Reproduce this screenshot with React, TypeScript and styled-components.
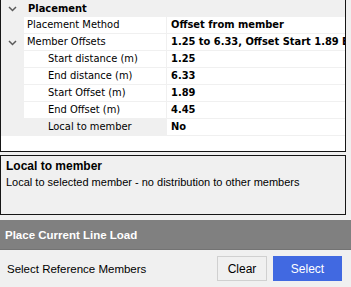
import React from "react";
import styled, { createGlobalStyle } from "styled-components";

const GlobalStyle = createGlobalStyle`
  body {
    margin: 0;
    background: #f0f0f0;
  }
`;

type Prop = {
  label: string;
  value: string;
  level: number;
  expandable?: boolean;
  selected?: boolean;
};

const props: Prop[] = [
  { label: "Placement Method", value: "Offset from member", level: 0 },
  {
    label: "Member Offsets",
    value: "1.25 to 6.33, Offset Start 1.89 End 4.45",
    level: 0,
    expandable: true,
  },
  { label: "Start distance (m)", value: "1.25", level: 1 },
  { label: "End distance (m)", value: "6.33", level: 1 },
  { label: "Start Offset (m)", value: "1.89", level: 1 },
  { label: "End Offset (m)", value: "4.45", level: 1 },
  { label: "Local to member", value: "No", level: 1, selected: true },
];

const Chevron = () => (
  <svg width="9" height="6" viewBox="0 0 9 6">
    <path d="M1 1 L4.5 4.5 L8 1" fill="none" stroke="#5a5a5a" strokeWidth="1.5" />
  </svg>
);

const App = () => {
  return (
    <>
      <GlobalStyle />
      <Page>
        <Grid>
          <CategoryRow>
            <Margin>
              <Chevron />
            </Margin>
            <CategoryName>Placement</CategoryName>
          </CategoryRow>
          {props.map((p) => (
            <Row key={p.label}>
              <Margin>{p.expandable ? <Chevron /> : null}</Margin>
              <Label $level={p.level} $selected={p.selected}>
                {p.label}
              </Label>
              <Value>{p.value}</Value>
            </Row>
          ))}
        </Grid>

        <Help>
          <HelpTitle>Local to member</HelpTitle>
          <HelpText>Local to selected member - no distribution to other members</HelpText>
        </Help>

        <Bar>Place Current Line Load</Bar>

        <Footer>
          <FooterLabel>Select Reference Members</FooterLabel>
          <Buttons>
            <ClearButton>Clear</ClearButton>
            <SelectButton>Select</SelectButton>
          </Buttons>
        </Footer>
      </Page>
    </>
  );
};

const Page = styled.div`
  width: 351px;
  height: 287px;
  background: #f0f0f0;
  display: flex;
  flex-direction: column;
  overflow: hidden;
`;

const Grid = styled.div`
  width: 346px;
  height: 152px;
  box-sizing: border-box;
  background: #fff;
  border: 1px solid #161616;
  border-top: none;
  font-family: "DejaVu Sans Condensed", "DejaVu Sans", sans-serif;
  font-size: 11px;
  color: #000;
  overflow: hidden;
`;

const CategoryRow = styled.div`
  display: flex;
  height: 17px;
  background: #f0f0f0;
`;

const Margin = styled.div`
  width: 23px;
  flex: none;
  display: flex;
  align-items: center;
  justify-content: center;
  background: #f0f0f0;
`;

const CategoryName = styled.div`
  padding-left: 4px;
  line-height: 17px;
  font-weight: bold;
`;

const Row = styled.div`
  display: flex;
  height: 17px;
`;

const Label = styled.div<{ $level: number; $selected?: boolean }>`
  width: 142px;
  flex: none;
  box-sizing: border-box;
  padding-left: ${(p) => (p.$level === 0 ? 3 : 24)}px;
  line-height: 16px;
  border-bottom: 1px solid #f0f0f0;
  background: ${(p) => (p.$selected ? "#f0f0f0" : "#fff")};
  white-space: nowrap;
  overflow: hidden;
`;

const Value = styled.div`
  flex: 1;
  min-width: 0;
  padding-left: 4px;
  line-height: 16px;
  font-weight: bold;
  border-left: 1px solid #f0f0f0;
  border-bottom: 1px solid #f0f0f0;
  white-space: nowrap;
  overflow: hidden;
`;

const Help = styled.div`
  width: 346px;
  height: 60px;
  box-sizing: border-box;
  margin-top: 3px;
  padding: 2px 0 0 5px;
  border: 1px solid #161616;
  background: #f0f0f0;
  font-family: "Liberation Sans", Arial, sans-serif;
  color: #000;
`;

const HelpTitle = styled.div`
  font-size: 12px;
  font-weight: bold;
  line-height: 16px;
`;

const HelpText = styled.div`
  font-size: 11px;
  line-height: 17px;
`;

const Bar = styled.div`
  margin-top: 5px;
  height: 30px;
  box-sizing: border-box;
  padding-left: 5px;
  display: flex;
  align-items: center;
  background: #808080;
  border-bottom: 1px solid #737373;
  color: #fff;
  font-family: "Liberation Sans", Arial, sans-serif;
  font-size: 11.5px;
  font-weight: bold;
`;

const Footer = styled.div`
  height: 37px;
  display: flex;
  align-items: center;
  padding: 0 9px 0 7px;
  font-family: "Liberation Sans", Arial, sans-serif;
  color: #000;
`;

const FooterLabel = styled.div`
  flex: 1;
  font-size: 11.5px;
`;

const Buttons = styled.div`
  display: flex;
  gap: 6px;
`;

const ButtonBase = styled.button`
  height: 25px;
  padding: 0;
  font-family: "Liberation Sans", Arial, sans-serif;
  font-size: 12px;
  cursor: pointer;
`;

const ClearButton = styled(ButtonBase)`
  width: 50px;
  background: #f0f0f0;
  border: 1px solid #d0d0d0;
  color: #000;
`;

const SelectButton = styled(ButtonBase)`
  width: 69px;
  background: #4169e1;
  border: none;
  color: #fff;
`;

export default App;
